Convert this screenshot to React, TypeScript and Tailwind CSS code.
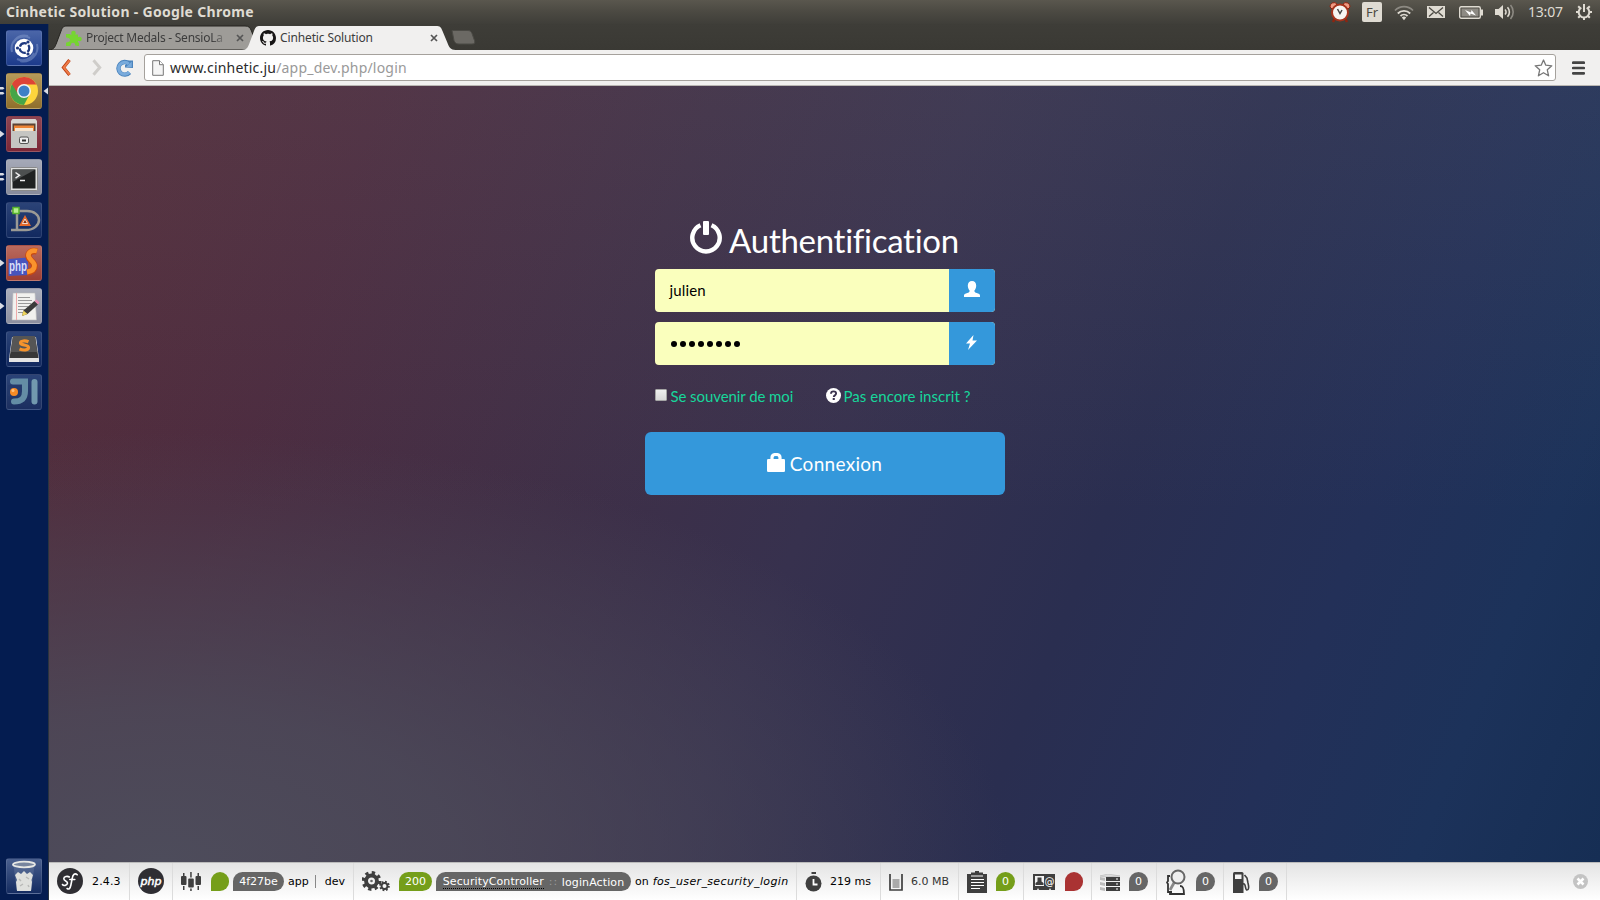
import type { ReactNode } from "react";

const UI = "font-['Noto_Sans','Open_Sans',sans-serif]";

/* ---------- Desktop panel ---------- */

function TopPanel() {
  return (
    <header className={`${UI} flex h-6 w-full shrink-0 items-center bg-linear-to-b from-[#5a574e] via-[#4b4942] to-[#3f3e39] pl-[6px] text-[#dfdbd2]`}>
      <span className="w-[260px] whitespace-nowrap text-[14px] font-bold leading-6 tracking-[0.3px]">Cinhetic Solution - Google Chrome</span>
      <div className="ml-auto flex h-6 items-center">
        <svg width="22" height="22" viewBox="0 0 22 22" className="mr-[11px]">
          <path d="M6 17l-2 4M16 17l2 4" stroke="#8d2410" strokeWidth="2.5" />
          <path d="M1 6a4 4 0 0 1 7-3L3 8zM21 6a4 4 0 0 0-7-3l5 5z" fill="#ef9b84" stroke="#8d2410" />
          <circle cx="11" cy="11.5" r="8" fill="#f7f5f2" stroke="#a5341d" strokeWidth="2" />
          <path d="M8.5 8l2.500 4.500L13 9" fill="none" stroke="#444" strokeWidth="1.500" />
        </svg>
        <span className="flex h-5 w-5 items-center justify-center rounded-[2px] bg-[#dfdbd2] pt-[1px] text-[13px] text-[#4b4942]">Fr</span>
        <svg width="20" height="16" viewBox="0 0 20 16" className="ml-3 mt-[2px]" fill="none">
          <path d="M1 5.500a12.500 12.500 0 0 1 18 0" stroke="#8d8a83" strokeWidth="1.700" />
          <path d="M3.800 8.500a8.700 8.700 0 0 1 12.400 0M6.500 11a5 5 0 0 1 7 0" stroke="#dfdbd2" strokeWidth="1.800" />
          <path d="M7.800 12.500L10 15.300l2.200-2.800a3.400 3.400 0 0 0-4.400 0z" fill="#dfdbd2" />
        </svg>
        <svg width="18" height="12" viewBox="0 0 18 12" className="ml-[13px]">
          <rect width="18" height="12" fill="#dfdbd2" />
          <path d="M2 1.500l7 6 7-6M2 10.500l4.500-4M16 10.500l-4.500-4" fill="none" stroke="#4b4942" strokeWidth="1.300" />
        </svg>
        <svg width="24" height="13" viewBox="0 0 24 13" className="ml-[14px]">
          <rect x=".7" y=".7" width="20.600" height="11.600" rx="1.500" fill="none" stroke="#dfdbd2" strokeWidth="1.400" />
          <rect x="2.500" y="2.500" width="17" height="8" fill="#8d8a83" />
          <path d="M22 3.500h2v6h-2z" fill="#dfdbd2" />
          <path d="M6 4l6 2.500.5-2.500L17 9.500 11.500 7.500 11 10z" fill="#fff" />
        </svg>
        <svg width="20" height="16" viewBox="0 0 20 16" className="ml-3" fill="none">
          <path d="M0 5h3.500L8 1v14l-4.500-4H0z" fill="#dfdbd2" />
          <path d="M10 5.500a3.500 3.500 0 0 1 0 5M12.500 3.200a7 7 0 0 1 0 9.600" stroke="#dfdbd2" strokeWidth="1.600" />
          <path d="M15.500 1a10.500 10.500 0 0 1 0 14" stroke="#8d8a83" strokeWidth="1.600" />
        </svg>
        <span className="mb-[1px] ml-[13px] w-[36px] whitespace-nowrap text-[14px] tracking-[-0.2px]">13:07</span>
        <svg width="16" height="18" viewBox="0 0 16 18" className="ml-3 mr-2" fill="none" stroke="#dfdbd2">
          <path d="M5.300 4.600a5.300 5.300 0 1 0 5.400 0" strokeWidth="2" />
          <path d="M8 1v8" strokeWidth="2" />
          <path d="M8 14.500V17M2.500 9H0M16 9h-2.500M4 13l-1.800 1.800M12 13l1.800 1.800M4 5L2.200 3.200M12 5l1.800-1.800" strokeWidth="2" />
        </svg>
      </div>
    </header>
  );
}

/* ---------- Launcher ---------- */

type Pips = "none" | "one" | "two";

function Tile({ tone, pips = "none", active = false, children }: { tone: string; pips?: Pips; active?: boolean; children: ReactNode }) {
  return (
    <div className="flex h-9 w-12 items-center">
      <svg width="6" height="12" viewBox="0 0 6 12" className="shrink-0" fill="#d9dce4">
        {pips === "one" && <path d="M0 2.500L4.500 6 0 9.500z" />}
        {pips === "two" && <path d="M0 2h3l1.500 1.300L3 4.600H0zM0 7h3l1.500 1.300L3 9.600H0z" />}
      </svg>
      <div className={`h-9 w-9 shrink-0 overflow-hidden rounded-[3px] border border-white/10 ${tone}`}>
        <svg width="34" height="34" viewBox="1 1 34 34">{children}</svg>
      </div>
      <svg width="6" height="10" viewBox="0 0 6 10" className="shrink-0" fill="#d9dce4">
        {active && <path d="M6 1.500v7L1.500 5z" />}
      </svg>
    </div>
  );
}

function Launcher() {
  return (
    <nav className="flex w-[49px] shrink-0 flex-col gap-[7px] border-r border-[#2a3440] bg-[#041c50] pb-[6px] pt-[6px]">
      <Tile tone="bg-linear-to-b from-[#4b66a8] to-[#1d3b8c]">
        <g fill="none" stroke="#8ea3d3" strokeOpacity=".45" strokeWidth="2">
          <path d="M6 22A13 13 0 0 1 22 6M14 31A14 14 0 0 0 31 14M7 13a13 13 0 0 1 17-5M28 23a13 13 0 0 1-17 6" />
        </g>
        <circle cx="18" cy="18" r="9.300" fill="#fff" />
        <circle cx="18.500" cy="18" r="4.800" fill="none" stroke="#203a80" strokeWidth="2.300" strokeDasharray="8.300 1.750" strokeDashoffset="4" />
        <g fill="#203a80"><circle cx="11.500" cy="18" r="1.600" /><circle cx="22" cy="12" r="1.600" /><circle cx="22" cy="24" r="1.600" /></g>
      </Tile>
      <Tile tone="bg-linear-to-b from-[#b59a5a] to-[#8f6f2c]" pips="two" active>
        <circle cx="18" cy="18" r="14" fill="#fdd53c" />
        <path d="M5.900 11A14 14 0 0 0 18 32l5.500-10.500L18 18z" fill="#46a548" />
        <path d="M18 11.500h12.400A14 14 0 0 0 5.900 11L11.500 20z" fill="#dd4437" />
        <circle cx="18" cy="18" r="7" fill="#f3f3f1" />
        <circle cx="18" cy="18" r="5.500" fill="#3d7fc6" />
      </Tile>
      <Tile tone="bg-linear-to-b from-[#8d4452] to-[#7b2737]" pips="one">
        <path d="M5 5l1.500-2h23L31 5v27H5z" fill="#d8d7d3" />
        <path d="M6.500 7.500h23V15h-23z" fill="#5c4335" />
        <path d="M8 9.500h20V15H8z" fill="#ee8434" />
        <path d="M9 12h18v3H9z" fill="#f6e5cf" />
        <path d="M5 15h26v17H5z" fill="#c5c5c2" />
        <rect x="13.500" y="21" width="9" height="6.500" rx="1.500" fill="#eee" stroke="#555" />
        <path d="M16 24.500h4" stroke="#333" strokeWidth="2" />
      </Tile>
      <Tile tone="bg-linear-to-b from-[#a5a9b7] to-[#878b9b]" pips="two">
        <rect x="4.500" y="8.500" width="27" height="23" rx="1" fill="#dfe0df" stroke="#8a8a8a" />
        <rect x="6.500" y="10.500" width="23" height="19" fill="#1f2121" />
        <path d="M6.500 10.500h23L6.500 23z" fill="#4d5050" />
        <path d="M9.500 13.500l4 2.800-4 2.800M14 21.500h5" fill="none" stroke="#eee" strokeWidth="1.500" />
      </Tile>
      <Tile tone="bg-linear-to-b from-[#2b4377] to-[#12295f]">
        <path d="M11 9h10c7 0 12 4 12 9s-5 10-13 10H5M11 12v16M5 9h4" fill="none" stroke="#9b9a95" strokeWidth="2.500" />
        <path d="M13 24l6-11 6 11z" fill="#e66a2c" /><path d="M16.500 21.500l2.500-4.500 2.500 4.500z" fill="#8a2f0b" stroke="#fff" strokeWidth=".8" />
        <rect x="7" y="5.500" width="6" height="6" fill="#b6f08e" stroke="#58b52c" strokeWidth="1.500" />
      </Tile>
      <Tile tone="bg-linear-to-b from-[#b96a5e] to-[#9d3e33]" pips="one">
        <path d="M2.500 14L22 12.500V30L2.500 31z" fill="#4754bd" />
        <text x="3" y="26" fontFamily="Liberation Sans" fontSize="15" fontWeight="bold" fill="#d8def8" textLength="18" lengthAdjust="spacingAndGlyphs">php</text>
        <path d="M31 6.500c-5-1.500-9 1-8.500 5s6 5.500 6 9.500-3.500 6-7.500 6.500" fill="none" stroke="#c94a10" strokeWidth="6.500" />
        <path d="M31 6c-5-1.500-9 1-8.500 5s6 5.500 6 9.500-3.500 6-7.500 6.500" fill="none" stroke="#fb922c" strokeWidth="4.800" />
      </Tile>
      <Tile tone="bg-linear-to-b from-[#aaaebb] to-[#8c8f9f]" pips="one">
        <path d="M7 5h22l1.500 27H6z" fill="#f1f1ef" stroke="#bbb" strokeWidth=".6" />
        <path d="M10.500 5v27" stroke="#e99" strokeWidth=".8" />
        <path d="M12 9.500h12M12 12.500h14M12 15.500h13M12 18.500h10M12 21.500h8M12 24.500h5" stroke="#999" />
        <path d="M16 28l1.500-5.500L28.500 13l3.500 3.500L21.500 26z" fill="#3b3b3b" />
        <path d="M28.500 13l2-1.500 3 3-1.500 2z" fill="#e58bb2" /><path d="M16 28l1.500-5.500 4 3.500z" fill="#efd65b" />
      </Tile>
      <Tile tone="bg-linear-to-b from-[#2b4377] to-[#12295f]">
        <path d="M3 28L6 6h24l3 22v3H3z" fill="#e4e4e4" />
        <path d="M7 5h22l3.500 22h-29z" fill="#383838" /><path d="M7 5h22l2.300 16H4.700z" fill="#555" />
        <path d="M22.500 10.800c-3-1.300-8-1.300-8 1.200s8 1.500 8 4.500-5 3-9 1.500" fill="none" stroke="#f5932c" strokeWidth="3.200" />
      </Tile>
      <Tile tone="bg-linear-to-b from-[#2b4377] to-[#1c2f60]">
        <path d="M7 7.500h12V17c0 8-4 10.500-11 10.500" fill="none" stroke="#648da5" strokeWidth="6" strokeLinecap="round" />
        <path d="M28.500 8v19.500" stroke="#7299ae" strokeWidth="6" strokeLinecap="round" />
        <path d="M2 11h13v11H2z" fill="#24396b" />
        <circle cx="8" cy="18" r="4" fill="#f68b25" /><circle cx="7" cy="16.500" r="1.500" fill="#ffc27c" />
      </Tile>
      <div className="mt-auto">
        <Tile tone="bg-linear-to-b from-[#4a5f8e] to-[#152c61]">
          <path d="M7.500 7l3 25h15l3-25z" fill="#8193b0" fillOpacity=".3" />
          <path d="M9 17l3-3 3 2 3-3 3 3 3-2 3 3-1.500 5 .5 2-1 9h-14l-1-9 1-2z" fill="#dfe0dd" />
          <path d="M13 21l2 2M20 19l3 2M14 28l3-2M22 27l1 2" stroke="#b9bab8" strokeWidth="1.500" fill="none" />
          <ellipse cx="18" cy="6.500" rx="11" ry="2.800" fill="#77859e" stroke="#e6e7e4" strokeWidth="1.800" />
        </Tile>
      </div>
    </nav>
  );
}

/* ---------- Browser chrome ---------- */

function TabStrip() {
  return (
    <div className={`${UI} relative flex h-[26px] bg-linear-to-b from-[#3e3d38] to-[#3a3934] text-[12px] text-[#3c3c3c]`}>
      <svg width="440" height="26" viewBox="0 0 440 26" className="absolute left-0 top-0">
        <path d="M0 26C5 25.500 6 23 7.500 19L12 7c1.500-4 2.500-5 6-5h178c4 0 5 1.500 6.500 5l7 19z" fill="#9e9c98" stroke="#24231f" />
        <path d="M193 26c5 0 6-3 7.500-7L205 7c1.500-4 2.500-5 6-5h176c4 0 5 1 6.500 5l5 12c1.500 4 3 7 8 7z" fill="#f1f0ef" />
        <path d="M403 6.500h15c3 0 4 .5 5 3l2.500 7c.8 2.500 0 3.500-2.500 3.500h-13c-3 0-4-1-5-3.500z" fill="#6b6964" stroke="#4b4a45" />
      </svg>
      <div className="relative flex h-[26px] w-[196px] items-center pl-4 pt-[2px]">
        <svg width="17" height="17" viewBox="0 0 17 17" className="shrink-0" fill="#76d531">
          <path d="M2.500 4.500h10.500v11H2.500z" />
          <circle cx="8.500" cy="3" r="2.300" /><circle cx="14.500" cy="9" r="2.300" />
          <circle cx="8" cy="15" r="2.200" fill="#9e9c98" /><circle cx="3" cy="10" r="2" fill="#9e9c98" />
          <path d="M1 4h4v3.500H1zM1 12.500h4V16H1zM11.500 12.500H14V16h-2.500z" />
        </svg>
        <span className="ml-1 w-[143px] whitespace-nowrap mask-r-from-88% mask-r-to-100% tracking-[-0.25px]">Project Medals - SensioLa</span>
        <svg width="8" height="8" viewBox="0 0 8 8" className="ml-[7px] shrink-0"><path d="M1 1l6 6M7 1L1 7" stroke="#555" strokeWidth="1.700" /></svg>
      </div>
      <div className="relative flex h-[26px] w-[197px] items-center pl-[15px] pt-[2px]">
        <svg width="16" height="16" viewBox="0 0 16 16" fill="#171515"><path d="M8 0C3.580 0 0 3.580 0 8c0 3.540 2.290 6.530 5.470 7.590.4.070.55-.17.55-.38 0-.19-.01-.82-.01-1.490-2.010.37-2.530-.49-2.690-.94-.09-.23-.48-.94-.82-1.130-.28-.15-.68-.52-.01-.53.63-.01 1.080.58 1.230.82.72 1.210 1.870.87 2.330.66.07-.52.28-.87.51-1.070-1.780-.2-3.640-.89-3.640-3.950 0-.87.31-1.590.82-2.150-.08-.2-.36-1.020.08-2.120 0 0 .67-.21 2.200.82.64-.18 1.320-.27 2-.27s1.360.09 2 .27c1.530-1.040 2.200-.82 2.200-.82.44 1.100.16 1.920.08 2.120.51.56.82 1.270.82 2.150 0 3.070-1.870 3.750-3.650 3.950.29.25.54.73.54 1.480 0 1.070-.01 1.930-.01 2.200 0 .21.15.46.55.38A8.010 8.010 0 0 0 16 8c0-4.420-3.580-8-8-8z" /></svg>
        <span className="ml-[4px] whitespace-nowrap tracking-[-0.13px]">Cinhetic Solution</span>
        <svg width="8" height="8" viewBox="0 0 8 8" className="ml-auto mr-[4px]"><path d="M1 1l6 6M7 1L1 7" stroke="#555" strokeWidth="1.700" /></svg>
      </div>
    </div>
  );
}

function AddressBar() {
  return (
    <div className={`${UI} flex h-9 items-center border-b border-[#b9b6b2] bg-[#f1f0ef] pl-3`}>
      <svg width="10" height="17" viewBox="0 0 10 17"><path d="M8.500 1L2.500 8.500 8.500 16" fill="none" stroke="#b93b12" strokeWidth="3.200" /><path d="M8.500 1.300L2.800 8.500l5.700 7.200" fill="none" stroke="#ee7a45" strokeWidth="2" /></svg>
      <svg width="10" height="17" viewBox="0 0 10 17" className="ml-[21px]"><path d="M1.500 1.300l6.200 7.200-6.200 7.200" fill="none" stroke="#cfcdca" strokeWidth="3" /></svg>
      <svg width="18" height="18" viewBox="0 0 18 18" className="ml-[14px]">
        <path d="M13.500 13.500A6.300 6.300 0 1 1 13 4.700" fill="none" stroke="#4b84bd" strokeWidth="4.400" /><path d="M9 8.500V6l3-2V1.500h5V9z" fill="#4b84bd" />
        <path d="M13.200 13.200A6 6 0 1 1 12.800 5" fill="none" stroke="#79abdc" strokeWidth="3" /><path d="M10 8L15.800 2.500V8z" fill="#79abdc" />
      </svg>
      <div className="ml-[10px] flex h-[27px] w-[1412px] items-center rounded-[3px] border border-[#a5a19c] bg-white pl-[7px] pr-[2px]">
        <svg width="12" height="16" viewBox="0 0 12 16"><path d="M.7.700h6.800l3.800 4v10.600H.7z" fill="#f5f5f5" stroke="#777" /><path d="M7.500.700v4h3.800" fill="#fff" stroke="#777" /></svg>
        <span className="ml-[6px] whitespace-nowrap text-[14px] tracking-[0.2px] text-[#2b2b2b]">www.cinhetic.ju<span className="text-[#999]">/app_dev.php/login</span></span>
        <svg width="19" height="18" viewBox="0 0 19 18" className="ml-auto"><path d="M9.500 1l2.300 5.200 6 .6-4.500 4 1.300 6-5.100-3.100-5.100 3.100 1.300-6-4.500-4 6-.6z" fill="#fff" stroke="#777" strokeWidth="1.300" strokeLinejoin="round" /></svg>
      </div>
      <svg width="13" height="14" viewBox="0 0 13 14" className="ml-4"><path d="M1.200 1.700h10.600M1.200 7h10.600M1.200 12.300h10.600" stroke="#444" strokeWidth="2.700" strokeLinecap="round" /></svg>
    </div>
  );
}

/* ---------- Login page ---------- */

function LoginForm() {
  return (
    <form className="flex w-[360px] flex-col font-['Lato',sans-serif] text-[15px]">
      <h1 className="flex h-[48px] justify-center text-white">
        <svg width="32" height="33" viewBox="0 0 32 33" className="shrink-0">
          <path d="M10.500 4.200a13.700 13.700 0 1 0 11 0" fill="none" stroke="#fff" strokeWidth="4.400" />
          <rect x="13" y="0" width="6" height="14" rx="1" fill="#fff" />
        </svg>
        <span className="ml-[7px] whitespace-nowrap text-[33px] leading-[38px] tracking-[-0.28px] [font-variant-ligatures:none]">Authentification</span>
      </h1>
      <div className="mx-[10px] flex h-[43px] overflow-hidden rounded-[4px] bg-[#faffbd]">
        <span className="flex flex-1 items-center pl-[15px] tracking-[0.15px] text-black">julien</span>
        <span className="flex w-[46px] items-center justify-center bg-[#3498db]">
          <svg width="16" height="16" viewBox="0 0 16 16" fill="#fff" className="mb-[3px]"><path d="M8 0c2.600 0 4.200 1.800 4.200 4.500 0 2-.7 3.800-1.700 4.800v1.200c0 .5.300.8.800 1l3.400 1.300c.8.300 1.300 1 1.300 1.900V16H0v-1.300c0-.9.500-1.600 1.300-1.900l3.400-1.300c.5-.2.800-.5.800-1V9.300c-1-1-1.700-2.800-1.700-4.800C3.800 1.800 5.400 0 8 0z" /></svg>
        </span>
      </div>
      <div className="mx-[10px] mt-[10px] flex h-[43px] overflow-hidden rounded-[4px] bg-[#faffbd]">
        <span className="flex flex-1 items-center gap-[3px] pl-4">
          {Array.from({ length: 8 }, (_, i) => <i key={i} className="h-[6px] w-[6px] rounded-full bg-black" />)}
        </span>
        <span className="flex w-[46px] items-center justify-center bg-[#3498db]">
          <svg width="11" height="15" viewBox="0 0 11 15" fill="#fff" className="mb-[2px]"><path d="M7.500 0L0 8.500h4L2 15l9-9.500H6.500z" /></svg>
        </span>
      </div>
      <div className="ml-[10px] mt-[21px] flex h-5 items-center text-[#17d79b]">
        <span className="mb-[2px] h-[12px] w-[12px] rounded-[1px] border border-[#a5a5a5] bg-linear-to-b from-[#eeeeee] to-[#d8d8d8]" />
        <span className="ml-1 w-[121px] whitespace-nowrap tracking-[-0.08px]">Se souvenir de moi</span>
        <svg width="15" height="15" viewBox="0 0 15 15" className="mb-[1px] ml-[34px]">
          <circle cx="7.500" cy="7.500" r="7.500" fill="#fff" />
          <path d="M5 5.800C5 4 6 3.400 7.500 3.400s2.600.8 2.600 2.200c0 1.800-2.300 1.700-2.300 3.300" fill="none" stroke="#3c3450" strokeWidth="1.900" /><rect x="6.700" y="10" width="2.100" height="2" fill="#3c3450" />
        </svg>
        <span className="ml-[3px] whitespace-nowrap tracking-[0.06px]">Pas encore inscrit ?</span>
      </div>
      <button type="button" className="mt-[26px] flex h-[63px] items-center justify-center rounded-[6px] bg-[#3498db] text-[19px] text-white">
        <svg width="18" height="19" viewBox="0 0 18 19" className="mb-[2px]"><path d="M5 8V4.500C5 2.500 6 1.500 9 1.500s4 1 4 3V8" fill="none" stroke="#fff" strokeWidth="3.200" /><rect y="6" width="18" height="13" rx="1.300" fill="#fff" /></svg>
        <span className="ml-[5px] mt-[2px] tracking-[0.3px]">Connexion</span>
      </button>
    </form>
  );
}

/* ---------- Symfony debug toolbar ---------- */

const badge = "flex h-[19px] items-center justify-center rounded-[10px] rounded-bl-none pt-[1px] text-white";

function Cell({ size, children }: { size: string; children: ReactNode }) {
  return <div className={`flex h-full shrink-0 items-center whitespace-nowrap border-r border-[#dcdcdc] ${size}`}>{children}</div>;
}

function GearShape({ cx, cy, r, hole, w }: { cx: number; cy: number; r: number; hole: number; w: number }) {
  return (
    <g fill="none" stroke="#3f3f3f">
      <circle cx={cx} cy={cy} r={(r * 0.78 + hole) / 2} strokeWidth={r * 0.78 - hole} />
      <circle cx={cx} cy={cy} r={r * 0.86} strokeWidth={w} strokeDasharray={`${(r * 0.86 * Math.PI) / 8} ${(r * 0.86 * Math.PI) / 8}`} />
    </g>
  );
}

function DebugToolbar() {
  return (
    <footer className="flex h-[38px] shrink-0 items-center border-t border-[#bbb] bg-linear-to-b from-[#e4e4e4] to-white font-['DejaVu_Sans',sans-serif] text-[11px] text-black">
      <Cell size="w-[81px] pl-2">
        <svg width="26" height="26" viewBox="0 0 26 26" className="mb-[2px]"><circle cx="13" cy="13" r="13" fill="#2f2e33" /><path d="M12.300 9c-1.800-1.200-5.500-.5-5.500 1.700 0 2.500 4 2 3.700 4.500-.3 2.300-4 3-5 1.300M20.200 6.800c-2.500-2.500-4.500.2-5 3.700l-1.300 6.500c-.7 3.500-2 4.800-3.800 3.500M12.800 11.500h5" fill="none" stroke="#fff" strokeWidth="1.600" strokeLinecap="round" /></svg>
        <span className="ml-[9px] mt-[1px] tracking-[0.15px]">2.4.3</span>
      </Cell>
      <Cell size="w-[43px] pl-2">
        <svg width="26" height="26" viewBox="0 0 26 26" className="mb-[2px]"><circle cx="13" cy="13" r="13" fill="#2f2e33" /><text x="2.500" y="16.500" fontFamily="DejaVu Sans" fontSize="11" fontStyle="italic" fill="#fff" stroke="#fff" strokeWidth=".5" textLength="21" lengthAdjust="spacingAndGlyphs">php</text></svg>
      </Cell>
      <Cell size="w-[181px] pl-2">
        <svg width="20" height="19" viewBox="0 0 20 19" fill="#3f3f3f"><rect y="4" width="5.500" height="9" rx="1" /><rect x="7.200" y="6.500" width="5.600" height="9" rx="1" /><rect x="14.500" y="4" width="5.500" height="9" rx="1" /><path d="M2 1h1.500v3H2zM2 14h1.500v4H2zM9.200 0h1.500v5.500H9.200zM9.200 16.500h1.500V19H9.200zM16.500 1H18v3h-1.500zM16.500 14H18v4h-1.500z" /></svg>
        <span className={`${badge} ml-[10px] w-[18px] bg-[#759e1a]`} />
        <span className={`${badge} ml-[4px] w-[51px] bg-[#666]`}>4f27be</span>
        <span className="ml-[4px] mt-[1px]">app</span>
        <span className="mb-[1px] ml-auto h-[13px] w-px bg-[#888]" />
        <span className="ml-[9px] mr-2 mt-[1px]">dev</span>
      </Cell>
      <Cell size="w-[443px] pl-2">
        <svg width="28" height="21" viewBox="0 0 28 21" className="mb-[1px]"><GearShape cx={9.500} cy={10} r={9.500} hole={3.500} w={3.500} /><circle cx="9.500" cy="10" r="1.300" fill="#666" /><GearShape cx={22.500} cy={15} r={5} hole={2} w={2} /></svg>
        <span className={`${badge} ml-[9px] w-[33px] bg-[#759e1a]`}>200</span>
        <span className={`${badge} ml-[4px] w-[195px] bg-[#666]`}>
          <span className="border-b border-dotted border-black leading-[13px] tracking-[0.1px]">SecurityController</span>
          <span className="mx-[5px] w-[8px] text-center tracking-[1px] text-[#999]">::</span>
          <span className="leading-[13px] tracking-[0.1px]">loginAction</span>
        </span>
        <span className="ml-[4px] mt-[1px]">on</span>
        <em className="ml-[4px] mt-[1px] tracking-[0.36px]">fos_user_security_login</em>
      </Cell>
      <Cell size="w-[84px] pl-2">
        <svg width="17" height="20" viewBox="0 0 17 20"><circle cx="8.500" cy="11.500" r="8" fill="#3f3f3f" /><path d="M6.500 0h4.500v2H6.500z" fill="#3f3f3f" /><path d="M8.500 7v5.500h4" stroke="#fff" strokeWidth="1.800" fill="none" /></svg>
        <span className="ml-[8px] mt-[1px]">219 ms</span>
      </Cell>
      <Cell size="w-[78px] pl-2">
        <svg width="14" height="18" viewBox="0 0 14 18" className="mt-[1px]"><path d="M1 1v16h12V1" fill="none" stroke="#3f3f3f" strokeWidth="1.700" /><path d="M3.500 6h7v9h-7z" fill="#aaa" /></svg>
        <span className="ml-[8px] mt-[1px] text-[#333]">6.0 MB</span>
      </Cell>
      <Cell size="w-[65px] pl-2">
        <svg width="20" height="22" viewBox="0 0 20 22" className="mt-[1px]"><path d="M0 3h4V1.500h4V0h4v1.500h4V3h4v19H0z" fill="#3f3f3f" /><path d="M4 5h12M4 8.500h13M4 11.500h13M4 14.500h13M4 17.500h9" stroke="#fff" strokeWidth="1.200" /></svg>
        <span className={`${badge} ml-[9px] w-[19px] bg-[#759e1a]`}>0</span>
      </Cell>
      <Cell size="w-[68px] pl-[9px]">
        <svg width="22" height="17" viewBox="0 0 22 17" className="mt-[1px]"><path d="M0 0h22v16h-4l-1-2-1 2H6l-1-2-1 2H0z" fill="#3f3f3f" /><path d="M2 2h9v10H2z" fill="#f2f2f2" /><path d="M4.500 3.500h4v4l2 1.500v2h-8V9l2-1.500z" fill="#3f3f3f" /><text x="11.500" y="10.500" fontSize="10" fontFamily="DejaVu Sans" fill="#fff">@</text></svg>
        <span className={`${badge} ml-[10px] w-[18px] bg-[#a33]`} />
      </Cell>
      <Cell size="w-[65px] pl-2">
        <svg width="20" height="18" viewBox="0 0 20 18" className="mt-[2px]"><path d="M0 2l8-2 12 2-14 1z" fill="#ddd" stroke="#aaa" strokeWidth=".5" /><path d="M0 3l5 1v3L0 6zM0 8l5 1v3l-5-1zM0 13l5 1v3l-5-1z" fill="#bbb" /><path d="M6 3h14v4H6zM6 8h14v4H6zM6 13h14v4H6z" fill="#3f3f3f" /><path d="M16 5h2M16 10h2M16 15h2" stroke="#fff" /></svg>
        <span className={`${badge} ml-[9px] w-[19px] bg-[#666]`}>0</span>
      </Cell>
      <Cell size="w-[67px] pl-[9px]">
        <svg width="21" height="26" viewBox="0 0 21 26" className="mt-[1px]" fill="none"><path d="M4 7H2v5l-1 1.500L2 15v8h4M14 17c3 0 4 2 4 8H4v-3" stroke="#333" strokeWidth="1.800" /><path d="M8.500 13L4 21" stroke="#888" strokeWidth="2.800" /><circle cx="12" cy="8" r="6.500" fill="#eee" stroke="#666" strokeWidth="2" /></svg>
        <span className={`${badge} ml-[9px] w-[19px] bg-[#666]`}>0</span>
      </Cell>
      <Cell size="w-[63px] pl-[9px]">
        <svg width="17" height="21" viewBox="0 0 17 21" className="mt-[1px]"><path d="M0 1.500Q0 0 1.500 0H9q1.500 0 1.500 1.500V21H0z" fill="#3f3f3f" /><path d="M2 2.500h6.500V7H2z" fill="#f4f4f4" /><path d="M10 12c3-1 2 6 4 6s2-3 1-7l-1-5-2.500-3" fill="none" stroke="#3f3f3f" strokeWidth="1.600" /></svg>
        <span className={`${badge} ml-[9px] w-[19px] bg-[#666]`}>0</span>
      </Cell>
      <svg width="15" height="15" viewBox="0 0 15 15" className="ml-auto mr-3"><circle cx="7.500" cy="7.500" r="7.500" fill="#c3c3c3" /><path d="M4.500 4.500l6 6M10.500 4.500l-6 6" stroke="#fff" strokeWidth="2.500" /></svg>
    </footer>
  );
}

export default function App() {
  return (
    <div className="flex h-[900px] w-[1600px] flex-col overflow-hidden">
      <TopPanel />
      <div className="flex min-h-0 flex-1">
        <Launcher />
        <section className="flex min-w-0 flex-1 flex-col">
          <TabStrip />
          <AddressBar />
          <main className="flex min-h-0 flex-1 flex-col items-center bg-[radial-gradient(ellipse_850px_430px_at_110px_100%,#4d4c5b_0%,#4d4c5bcc_35%,#4d4c5b00_100%),linear-gradient(180deg,#7f7f7f22_0%,#7f7f7f00_55%),linear-gradient(112deg,#552c38_0%,#4c2b3f_18%,#3f2f47_36%,#37314e_50%,#2a2e50_66%,#233058_80%,#1c325a_90%,#162e54_100%)] pt-[135px]">
            <LoginForm />
          </main>
          <DebugToolbar />
        </section>
      </div>
    </div>
  );
}
